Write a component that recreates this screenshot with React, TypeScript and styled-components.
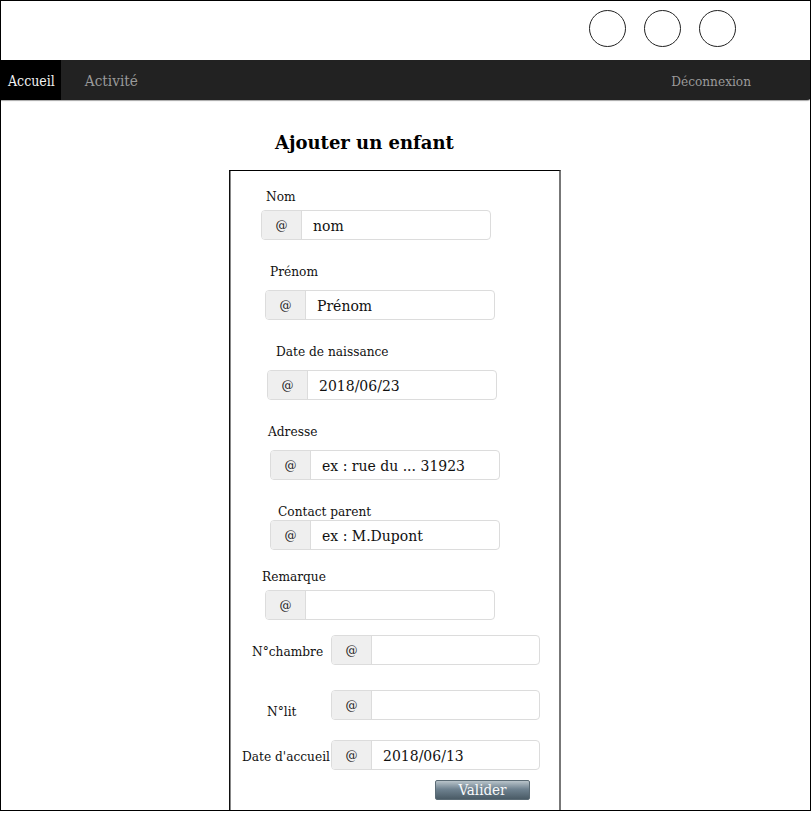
import React from "react";
import styled, { createGlobalStyle } from "styled-components";

const Global = createGlobalStyle`
  html, body { margin: 0; padding: 0; background: #fff; }
  body { font-family: "DejaVu Serif", serif; }
  * { box-sizing: border-box; }
`;

const Page = styled.div`
  width: 811px;
  height: 811px;
  border: 1px solid #000;
  overflow: hidden;
  display: flex;
  flex-direction: column;
`;

const Header = styled.header`
  flex: none;
  height: 59px;
  display: flex;
  justify-content: flex-end;
  align-items: flex-start;
  gap: 18px;
  padding: 9px 74px 0 0;
`;

const Circle = styled.div`
  width: 37px;
  height: 37px;
  border-radius: 50%;
  border: 1px solid #222;
`;

const Nav = styled.nav`
  flex: none;
  height: 40px;
  margin: 0 -1px 0 -1px;
  background: #222;
  border-radius: 0 0 4px 0;
  box-shadow: 0 1px 1px rgba(0, 0, 0, 0.35);
  display: flex;
  align-items: stretch;
  font-family: "DejaVu Serif", serif;
  font-stretch: condensed;
`;

const NavItem = styled.a<{ $active?: boolean; $size?: number; $pad?: string }>`
  display: flex;
  align-items: center;
  padding: ${(p) => p.$pad || "0 8px"};
  background: ${(p) => (p.$active ? "#000" : "transparent")};
  color: ${(p) => (p.$active ? "#f2f2f2" : "#9a9a9a")};
  font-size: ${(p) => p.$size || 13}px;
  text-decoration: none;
`;

const Spacer = styled.div`
  flex: 1;
`;

const Main = styled.main`
  flex: none;
  display: flex;
  flex-direction: column;
  padding-left: 228px;
`;

const Title = styled.h2`
  margin: 31px 0 0 46px;
  height: 39px;
  font-size: 18px;
  line-height: 24px;
  font-weight: bold;
  color: #000;
`;

const FormBox = styled.form`
  width: 332px;
  height: 700px;
  border-top: 1px solid #000;
  border-left: 1px solid #111;
  border-right: 2px solid #777;
  box-shadow: inset 1px 0 0 #888;
  display: flex;
  flex-direction: column;
`;

const Field = styled.div<{ $top: number }>`
  display: flex;
  flex-direction: column;
  margin-top: ${(p) => p.$top}px;
`;

const Label = styled.label<{ $x: number; $gap: number }>`
  display: block;
  margin-left: ${(p) => p.$x}px;
  margin-bottom: ${(p) => p.$gap - 1}px;
  padding-top: 1px;
  font-size: 12.2px;
  line-height: 16px;
  color: #111;
`;

const Row = styled.div<{ $top: number; $x: number }>`
  display: flex;
  align-items: flex-start;
  margin-top: ${(p) => p.$top}px;
  padding-left: ${(p) => p.$x}px;
`;

const RowLabel = styled.label<{ $w: number; $dy: number }>`
  width: ${(p) => p.$w}px;
  flex: none;
  margin-top: ${(p) => p.$dy + 1}px;
  font-size: 12.2px;
  line-height: 16px;
  color: #111;
  white-space: nowrap;
`;

const Group = styled.div<{ $x?: number; $w?: number }>`
  display: flex;
  width: ${(p) => p.$w || 230}px;
  height: 30px;
  margin-left: ${(p) => p.$x || 0}px;
  border: 1px solid #dcdcdc;
  border-radius: 4px;
  overflow: hidden;
  background: #fff;
`;

const Addon = styled.span`
  width: 40px;
  flex: none;
  display: flex;
  align-items: center;
  justify-content: center;
  padding-top: 1px;
  background: #efefef;
  border-right: 1px solid #dcdcdc;
  font-size: 12px;
  color: #222;
`;

const Input = styled.input`
  flex: 1;
  min-width: 0;
  border: none;
  outline: none;
  padding: 1px 11px 0;
  font-family: "DejaVu Serif", serif;
  font-size: 14px;
  color: #111;
  background: transparent;
  &::placeholder { color: #111; opacity: 1; }
`;

const ButtonRow = styled.div`
  display: flex;
  margin-top: 10px;
  padding-left: 205px;
`;

const Button = styled.button`
  width: 95px;
  height: 20px;
  padding: 0;
  border: 1px solid #5b6b75;
  border-radius: 2px;
  background: linear-gradient(#b9c4ca, #6f8290 45%, #4a5b66);
  color: #f8f9fa;
  font-family: "DejaVu Serif", serif;
  font-stretch: condensed;
  font-size: 15px;
  line-height: 18px;
`;

type F = { label: string; lx: number; gap: number; gx: number; top: number; value?: string };

const fields: F[] = [
  { label: "Nom", lx: 36, gap: 6, gx: 31, top: 17, value: "nom" },
  { label: "Prénom", lx: 40, gap: 11, gx: 35, top: 23, value: "Prénom" },
  { label: "Date de naissance", lx: 46, gap: 11, gx: 37, top: 23, value: "2018/06/23" },
  { label: "Adresse", lx: 38, gap: 11, gx: 40, top: 23, value: "ex : rue du ... 31923" },
  { label: "Contact parent", lx: 48, gap: 1, gx: 40, top: 23, value: "ex : M.Dupont" },
  { label: "Remarque", lx: 32, gap: 6, gx: 35, top: 18, value: "" },
];

type R = { label: string; x: number; w: number; dy: number; top: number; value?: string };

const rows: R[] = [
  { label: "N°chambre", x: 22, w: 79, dy: 8, top: 15, value: "" },
  { label: "N°lit", x: 37, w: 64, dy: 13, top: 25, value: "" },
  { label: "Date d'accueil", x: 12, w: 89, dy: 8, top: 20, value: "2018/06/13" },
];

export default function App() {
  return (
    <>
      <Global />
      <Page>
        <Header>
          <Circle />
          <Circle />
          <Circle />
        </Header>
        <Nav>
          <NavItem $active $size={14} $pad="2px 6px 0 8px">Accueil</NavItem>
          <NavItem $size={15.2} $pad="2px 0 0 24px">Activité</NavItem>
          <Spacer />
          <NavItem $size={13.5} $pad="2px 60px 0 0">Déconnexion</NavItem>
        </Nav>
        <Main>
          <Title>Ajouter un enfant</Title>
          <FormBox onSubmit={(e) => e.preventDefault()}>
            {fields.map((f) => (
              <Field key={f.label} $top={f.top}>
                <Label $x={f.lx} $gap={f.gap}>{f.label}</Label>
                <Group $x={f.gx}>
                  <Addon>@</Addon>
                  <Input defaultValue={f.value} />
                </Group>
              </Field>
            ))}
            {rows.map((r) => (
              <Row key={r.label} $top={r.top} $x={r.x}>
                <RowLabel $w={r.w} $dy={r.dy}>{r.label}</RowLabel>
                <Group $w={209}>
                  <Addon>@</Addon>
                  <Input defaultValue={r.value} />
                </Group>
              </Row>
            ))}
            <ButtonRow>
              <Button type="submit">Valider</Button>
            </ButtonRow>
          </FormBox>
        </Main>
      </Page>
    </>
  );
}
